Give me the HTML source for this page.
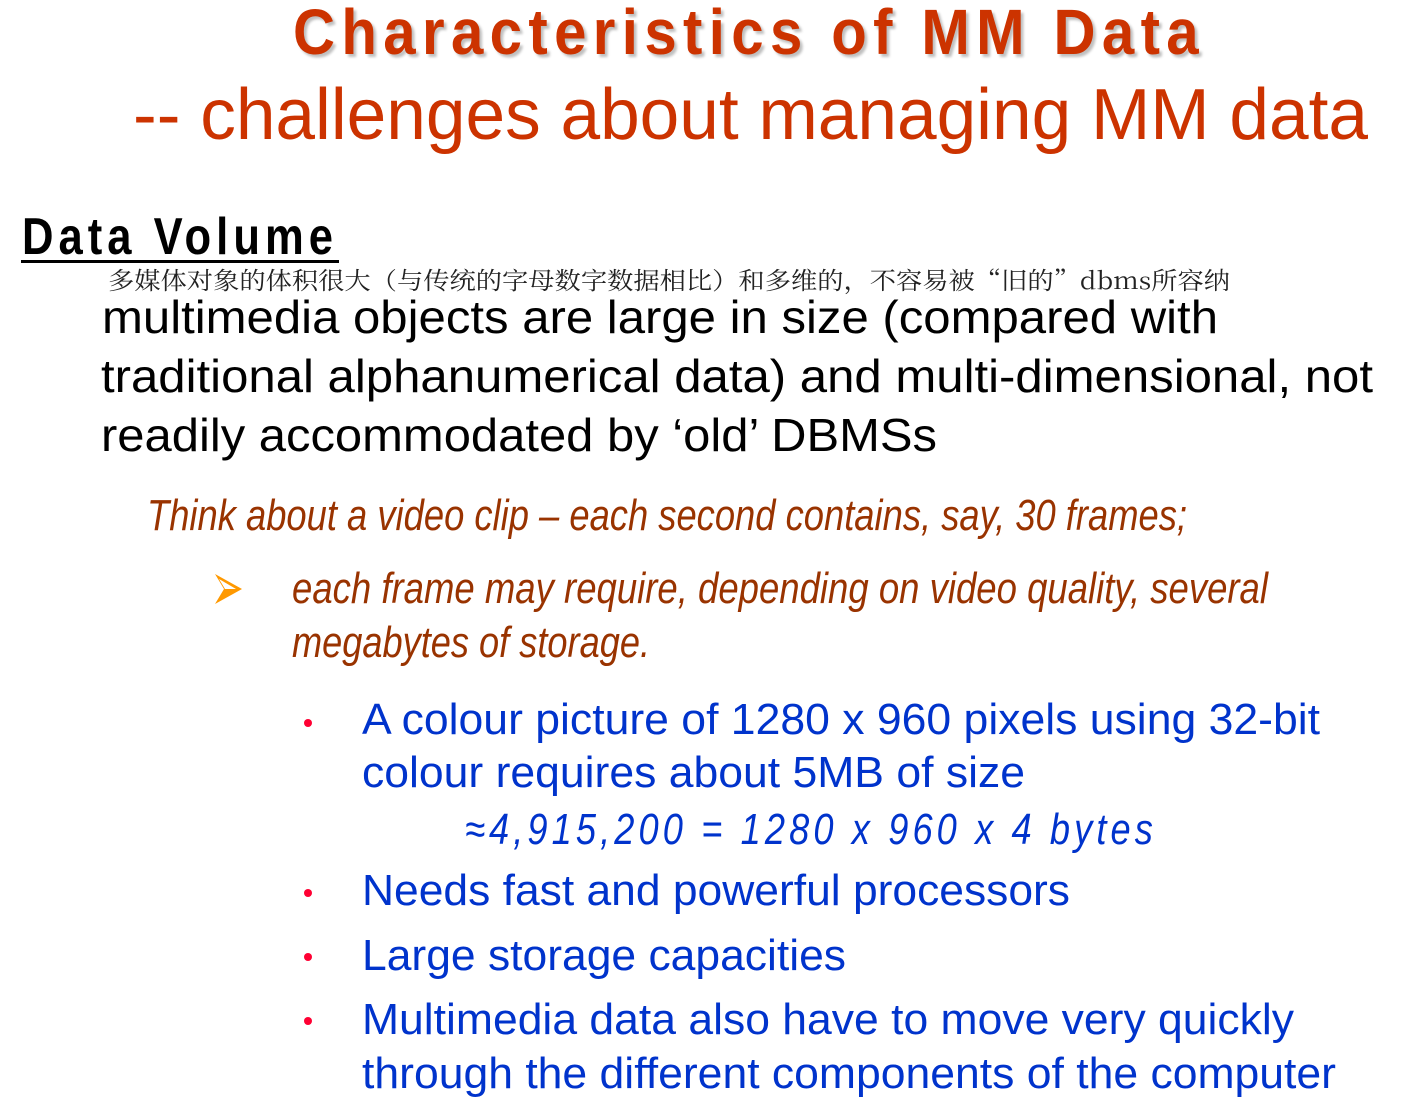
<!DOCTYPE html>
<html><head><meta charset="utf-8"><style>
html,body{margin:0;padding:0;background:#fff;width:1424px;height:1107px;overflow:hidden;position:relative}
.l{position:absolute;white-space:nowrap;line-height:1;font-family:"Liberation Sans","Noto Sans CJK SC",sans-serif;transform-origin:0 0}
.t1{color:#cc3300;font-weight:bold;font-size:64px;text-shadow:3px 3px 3px rgba(0,0,0,.25);letter-spacing:7px}
.t2{color:#cc3300;font-size:72px}
.dv{font-weight:bold;font-size:52px;color:#000;letter-spacing:6px}
.cn{font-family:"Noto Serif CJK SC","Liberation Serif",serif;font-size:24px;color:#222}
.bk{font-size:46px;color:#000}
.br{font-size:44px;color:#993300;font-style:italic}
.bl{font-size:44px;color:#0033cc}
.fm{font-size:44px;color:#0033cc;font-style:italic;letter-spacing:5px}
.dot{position:absolute;width:8px;height:8px;border-radius:50%;background:#ff0033}
</style></head><body>
<div class="l t1" style="left:293px;top:0px" w="912">Characteristics of MM Data</div>
<div class="l t2" style="left:133px;top:79px" w="1235">-- challenges about managing MM data</div>
<div class="l dv" style="left:22px;top:211px" w="316">Data Volume</div>
<div style="position:absolute;left:21px;top:260px;width:318px;height:3px;background:#000"></div>
<div class="l cn" style="left:108px;top:267px" w="1122">多媒体对象的体积很大（与传统的字母数字数据相比）和多维的，不容易被“旧的”dbms所容纳</div>
<div class="l bk" style="left:102px;top:294px" w="1116">multimedia objects are large in size (compared with</div>
<div class="l bk" style="left:101px;top:353px" w="1272">traditional alphanumerical data) and multi-dimensional, not</div>
<div class="l bk" style="left:101px;top:412px" w="836">readily accommodated by ‘old’ DBMSs</div>
<div class="l br" style="left:147px;top:494px" w="1040">Think about a video clip – each second contains, say, 30 frames;</div>
<svg style="position:absolute;left:214px;top:573px" width="30" height="32" viewBox="0 0 30 32"><path d="M1 1 L28 16 L1 31 L10 16 Z" fill="#ff9900"/><path d="M5 6 L22 16 L11 16 Z" fill="#fff"/></svg>
<div class="l br" style="left:292px;top:567px" w="976">each frame may require, depending on video quality, several</div>
<div class="l br" style="left:292px;top:621px" w="358">megabytes of storage.</div>
<div class="dot" style="left:304px;top:719px"></div>
<div class="l bl" style="left:362px;top:698px" w="958">A colour picture of 1280 x 960 pixels using 32-bit</div>
<div class="l bl" style="left:362px;top:751px" w="663">colour requires about 5MB of size</div>
<div class="l fm" style="left:465px;top:808px" w="692">≈4,915,200 = 1280 x 960 x 4 bytes</div>
<div class="dot" style="left:304px;top:889px"></div>
<div class="l bl" style="left:362px;top:869px" w="708">Needs fast and powerful processors</div>
<div class="dot" style="left:304px;top:953px"></div>
<div class="l bl" style="left:362px;top:934px" w="484">Large storage capacities</div>
<div class="dot" style="left:304px;top:1017px"></div>
<div class="l bl" style="left:362px;top:998px" w="932">Multimedia data also have to move very quickly</div>
<div class="l bl" style="left:362px;top:1052px" w="974">through the different components of the computer</div>
<script>
document.querySelectorAll('.l').forEach(function(e){var w=+e.getAttribute('w');if(w){var r=e.getBoundingClientRect().width;if(r>0)e.style.transform='scaleX('+(w/r)+')';}});
</script>
</body></html>
